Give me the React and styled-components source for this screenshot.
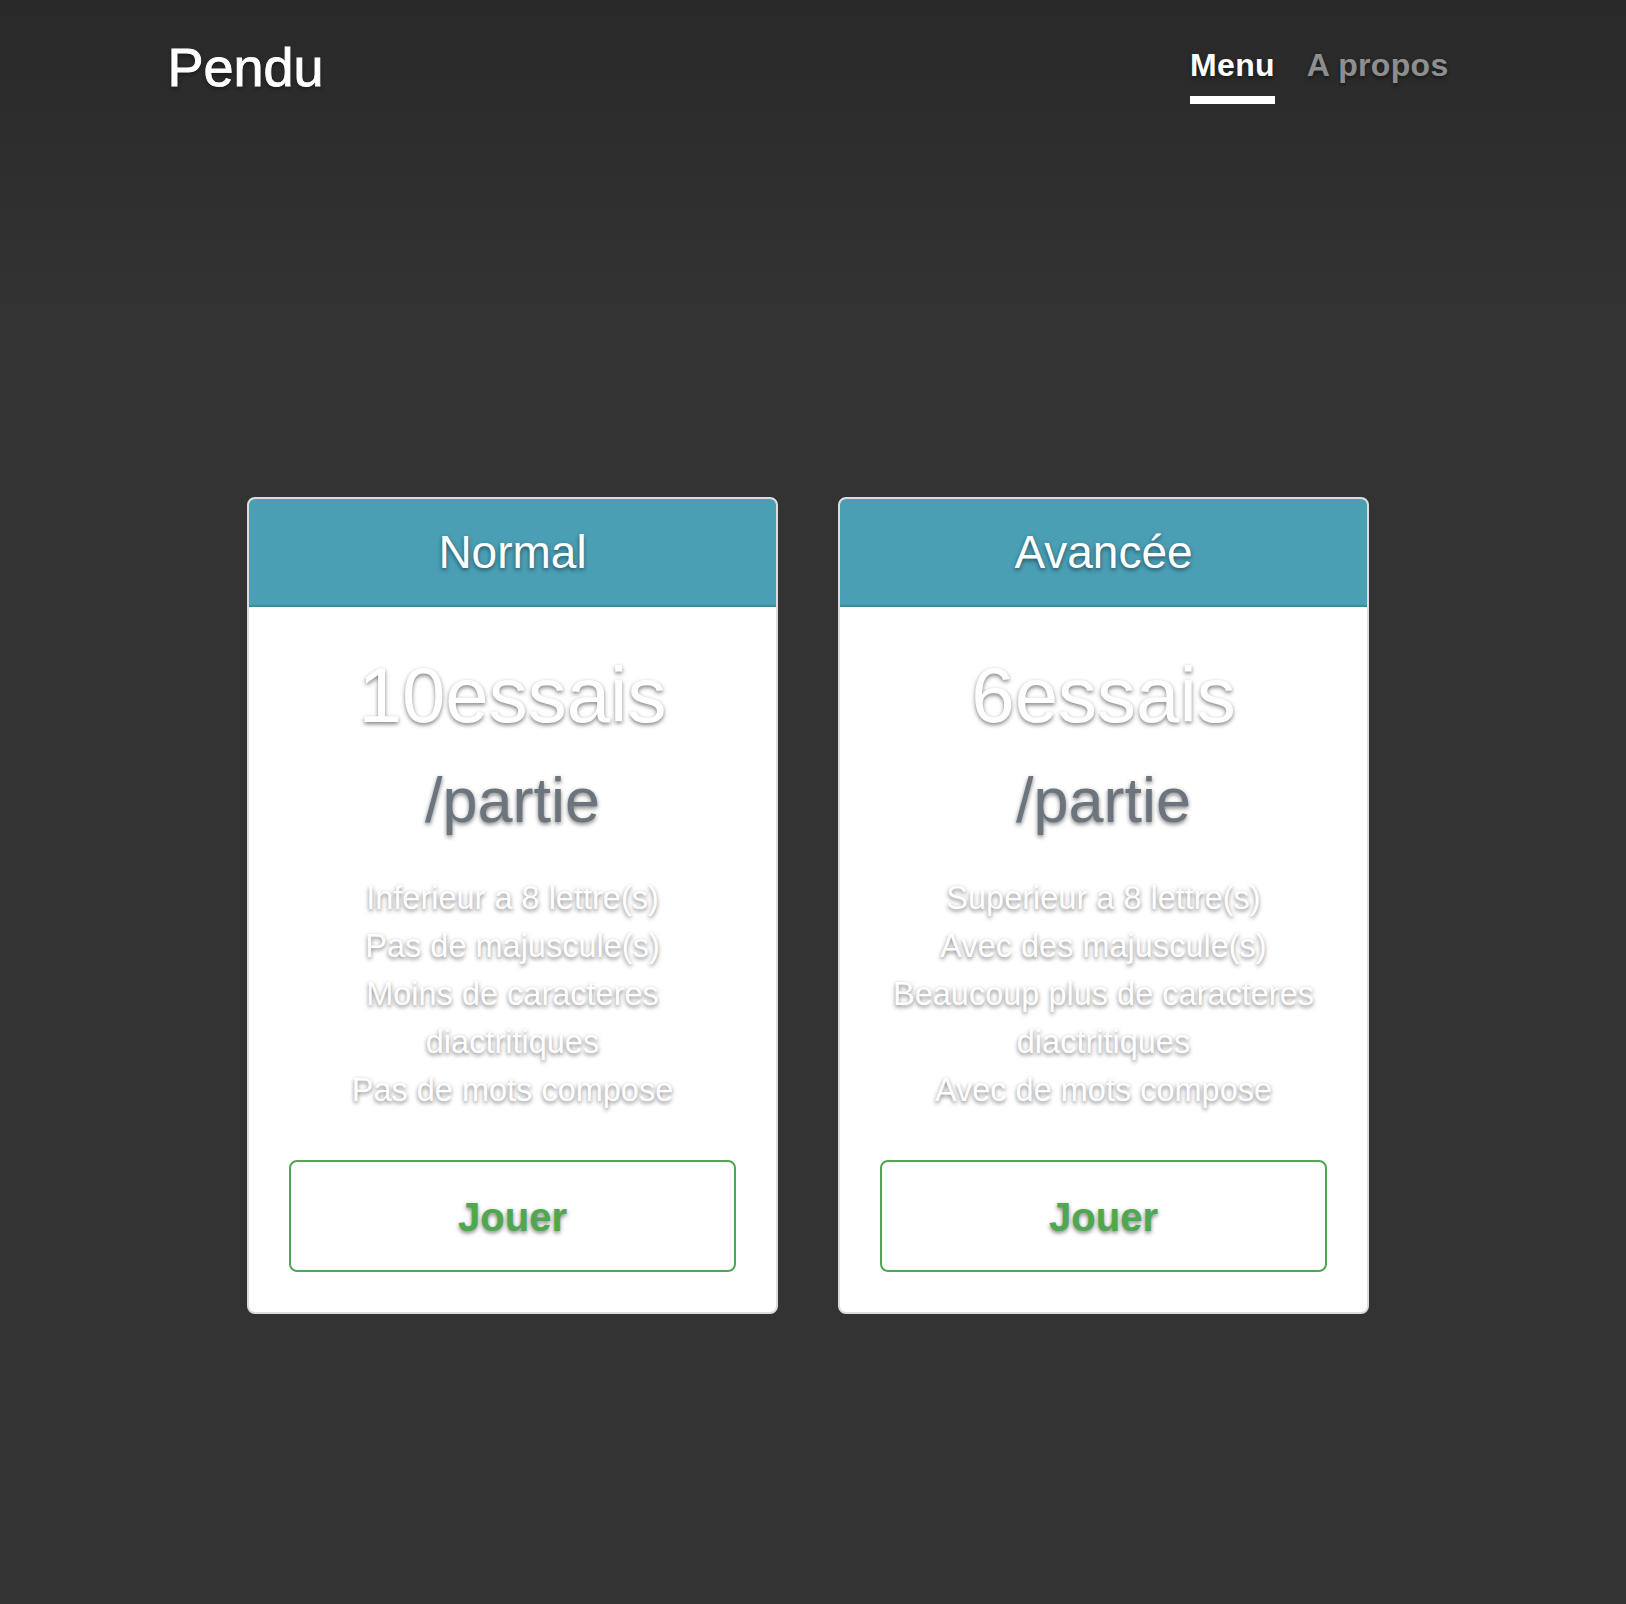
import styled, { createGlobalStyle } from "styled-components";

const GlobalStyle = createGlobalStyle`
  html, body { margin: 0; padding: 0; }
  body {
    background: linear-gradient(to bottom, #292929 0, #333333 320px) #333333;
    font-family: "Liberation Sans", Arial, sans-serif;
    color: #fff;
  }
`;

const shadow = "0 2px 4px rgba(0, 0, 0, 0.5)";

const Page = styled.div`
  width: 1616px;
  min-height: 1604px;
`;

// --- header ---
const Masthead = styled.header`
  width: 1281px;
  margin: 0 auto;
  padding-top: 36px;
  display: flex;
  justify-content: space-between;
  align-items: flex-start;
`;

const Brand = styled.h3`
  margin: 0;
  font-size: 54px;
  line-height: 62px;
  font-weight: 400;
  -webkit-text-stroke: 0.9px #fff;
  text-shadow: ${shadow};
`;

const Nav = styled.nav`
  margin-top: 6px;
  display: flex;
  gap: 32px;
`;

const NavLink = styled.a`
  font-size: 32px;
  line-height: 46px;
  font-weight: 700;
  letter-spacing: 0.3px;
  padding-bottom: 8px;
  text-shadow: ${shadow};
  color: ${(p) => (p.active ? "#fff" : "rgba(255, 255, 255, 0.5)")};
  border-bottom: 8px solid ${(p) => (p.active ? "#fff" : "transparent")};
  text-decoration: none;
`;

// --- cards ---
const Deck = styled.main`
  margin-top: 393px;
  display: flex;
  justify-content: center;
  gap: 60px;
`;

const Card = styled.div`
  width: 531px;
  box-sizing: border-box;
  background: #fff;
  border: 2px solid #dcdcdc;
  border-radius: 8px;
  overflow: hidden;
  text-align: center;
`;

const CardHeader = styled.div`
  background: #4a9fb5;
  border-bottom: 2px solid #3d8a9d;
  padding: 25px 0;
  font-size: 46px;
  line-height: 56px;
  text-shadow: ${shadow};
`;

const CardBody = styled.div`
  padding: 43px 40px 40px;
`;

const Tries = styled.h1`
  margin: 0;
  font-size: 78px;
  line-height: 91px;
  font-weight: 400;
  color: #fff;
  text-shadow: ${shadow};
`;

const PerGame = styled.div`
  margin-top: 23px;
  font-size: 63px;
  line-height: 72px;
  color: #6c757d;
  text-shadow: ${shadow};
`;

const Rules = styled.ul`
  list-style: none;
  margin: 38px 0 46px;
  padding: 0;
  font-size: 32.5px;
  line-height: 48px;
  color: #fff;
  text-shadow: ${shadow};
`;

const PlayButton = styled.button`
  display: block;
  width: 100%;
  height: 112px;
  padding-top: 3px;
  background: #fff;
  border: 2px solid #4fa74f;
  border-radius: 8px;
  font-family: inherit;
  font-size: 40px;
  font-weight: 700;
  color: #4fa74f;
  text-shadow: ${shadow};
  cursor: pointer;
`;

const MODES = [
  {
    name: "Normal",
    tries: "10essais",
    rules: ["Inferieur a 8 lettre(s)", "Pas de majuscule(s)", "Moins de caracteres diactritiques", "Pas de mots compose"],
  },
  {
    name: "Avancée",
    tries: "6essais",
    rules: ["Superieur a 8 lettre(s)", "Avec des majuscule(s)", "Beaucoup plus de caracteres diactritiques", "Avec de mots compose"],
  },
];

export default function App() {
  return (
    <Page>
      <GlobalStyle />
      <Masthead>
        <Brand>Pendu</Brand>
        <Nav>
          <NavLink href="#" active>Menu</NavLink>
          <NavLink href="#">A propos</NavLink>
        </Nav>
      </Masthead>

      <Deck>
        {MODES.map((mode) => (
          <Card key={mode.name}>
            <CardHeader>{mode.name}</CardHeader>
            <CardBody>
              <Tries>{mode.tries}</Tries>
              <PerGame>/partie</PerGame>
              <Rules>
                {mode.rules.map((r) => (
                  <li key={r}>{r}</li>
                ))}
              </Rules>
              <PlayButton>Jouer</PlayButton>
            </CardBody>
          </Card>
        ))}
      </Deck>
    </Page>
  );
}
